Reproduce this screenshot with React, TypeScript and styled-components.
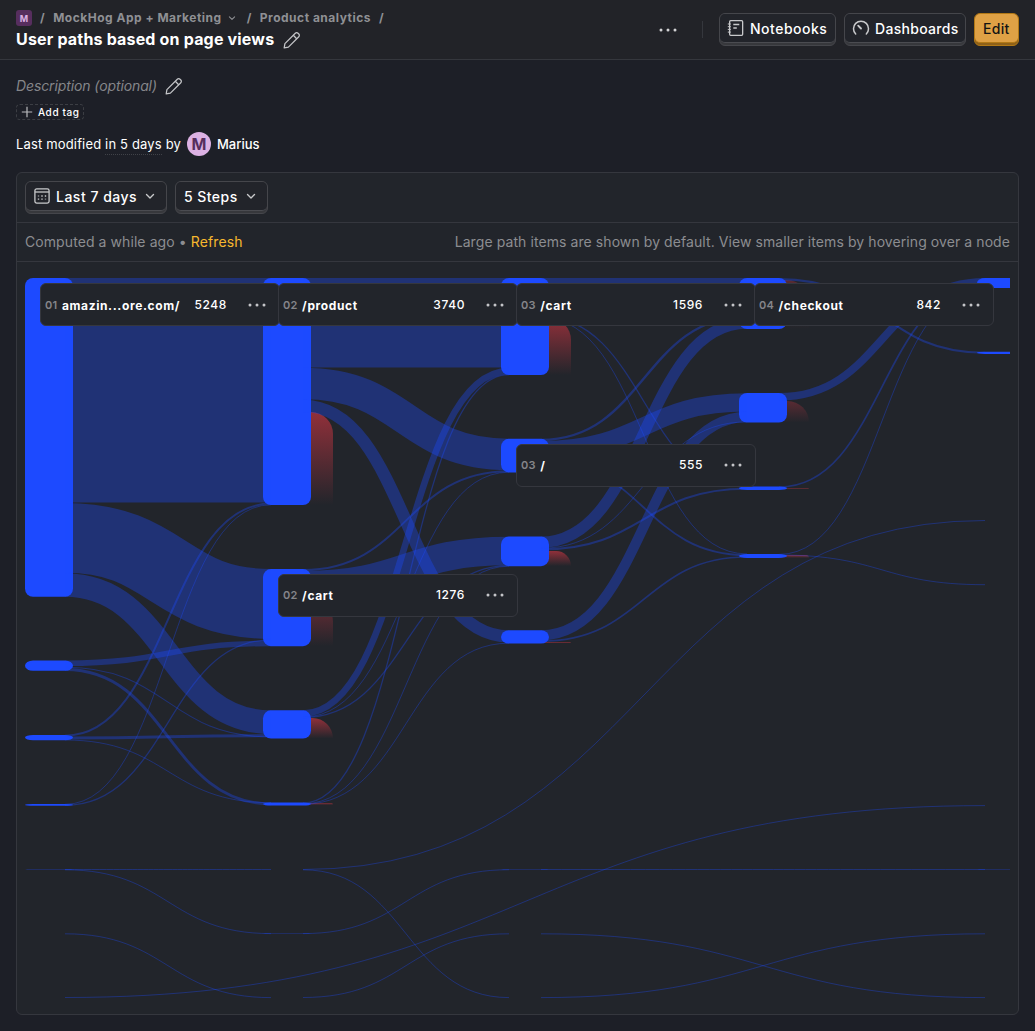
import React from 'react';
import styled, { createGlobalStyle } from 'styled-components';

const GlobalStyle = createGlobalStyle`
  *, *::before, *::after { box-sizing: border-box; }
  html, body { margin: 0; background: #1d1f27; }
  body {
    font-family: Inter, "Liberation Sans", sans-serif;
    font-size: 14px;
    color: #fff;
    overflow: hidden;
  }
`;

const Page = styled.div`
  width: 100%;
  height: 1031px;
  display: flex;
  flex-direction: column;
  background: #1d1f27;
`;

const Header = styled.header`
  flex: none;
  height: 60px;
  padding: 9px 16px 0;
  display: flex;
  justify-content: space-between;
  background: #222328;
  border-bottom: 1px solid #35373d;
`;

const HeaderMain = styled.div`
  display: flex;
  flex-direction: column;
`;

const Crumbs = styled.nav`
  display: flex;
  align-items: center;
  height: 17px;
  font-size: 12px;
  font-weight: 700;
  line-height: 17px;
  letter-spacing: 0.5px;
  color: #8f9094;
  white-space: nowrap;
`;

const ProjectMark = styled.span`
  width: 16px;
  height: 16px;
  margin-top: 1px;
  border-radius: 3px;
  display: flex;
  align-items: center;
  justify-content: center;
  background: #572e5e;
  color: #dcb1e3;
  font-size: 9px;
  letter-spacing: 0;
`;

const Slash = styled.span<{ $left: number; $right: number }>`
  margin-left: ${(p) => p.$left}px;
  margin-right: ${(p) => p.$right}px;
`;

const CrumbIcon = styled.span`
  display: flex;
  margin: 1px 0 0 4px;
`;

const TitleRow = styled.div`
  display: flex;
  align-items: center;
  gap: 9px;
  height: 26px;
`;

const Title = styled.h1`
  margin: 0;
  font-size: 16px;
  line-height: 24px;
  font-weight: 700;
  letter-spacing: 0.18px;
  white-space: nowrap;
`;

const IconSlot = styled.span<{ $top?: number }>`
  display: flex;
  margin-top: ${(p) => p.$top ?? 0}px;
  color: #c4c5c8;
`;

const HeaderActions = styled.div`
  display: flex;
  align-items: flex-start;
  gap: 8px;
  padding-top: 4px;
`;

const MoreSlot = styled.span`
  display: flex;
  align-items: center;
  height: 34px;
  margin-right: 17px;
  color: #d2d2d4;
`;

const Divider = styled.span`
  width: 1px;
  height: 17px;
  margin: 8px 8px 0 0;
  background: #35373d;
`;

const Button = styled.button<{ $primary?: boolean; $width: number }>`
  width: ${(p) => p.$width}px;
  height: 33px;
  padding: 0 0 2px;
  border: 1px solid ${(p) => (p.$primary ? '#b17816' : '#45464b')};
  border-radius: 6px;
  background: ${(p) => (p.$primary ? '#8f6118' : '#37383c')};
  font: inherit;
  display: block;
`;

const ButtonFace = styled.span<{ $primary?: boolean; $tracking?: number }>`
  display: flex;
  align-items: center;
  gap: 5px;
  height: 29px;
  padding: 2px 8px 0;
  border-radius: 5px;
  border-bottom: 1px solid ${(p) => (p.$primary ? '#b17816' : '#4b4c51')};
  background: ${(p) => (p.$primary ? '#dfa145' : '#22242a')};
  color: ${(p) => (p.$primary ? '#141414' : '#fff')};
  font-size: 14px;
  font-weight: 450;
  line-height: 20px;
  letter-spacing: ${(p) => p.$tracking ?? 0.3}px;
  white-space: nowrap;
`;

const Leading = styled.span`
  display: flex;
  flex: none;
  margin: -2px 0 0 -1px;
  color: #c8c9cb;
`;

const Trailing = styled.span`
  display: flex;
  flex: none;
  margin: -2px 0 0 auto;
  color: #c8c9cb;
`;

const Meta = styled.section`
  flex: none;
  height: 112px;
  padding: 14px 16px 0;
  display: flex;
  flex-direction: column;
  align-items: flex-start;
`;

const Description = styled.div`
  display: flex;
  align-items: center;
  gap: 8px;
  height: 24px;
  padding-bottom: 1px;
  font-size: 14px;
  font-style: italic;
  letter-spacing: -0.11px;
  color: #85868a;
  white-space: nowrap;
`;

const AddTag = styled.button`
  display: flex;
  align-items: center;
  gap: 5px;
  width: 68px;
  height: 16px;
  margin-top: 6px;
  padding: 0 4px 0 5px;
  border: 1px dashed #3c3e44;
  border-radius: 4px;
  background: transparent;
  color: #fff;
  font: inherit;
  font-size: 10px;
  font-weight: 500;
  letter-spacing: 0.6px;
  white-space: nowrap;
  svg { flex: none; margin-left: -1px; }
`;

const Modified = styled.div`
  display: flex;
  align-items: center;
  height: 24px;
  margin-top: 12px;
  font-size: 13px;
  letter-spacing: 0.16px;
  white-space: pre;
`;

const When = styled.span`
  border-bottom: 1px dotted #404248;
  line-height: 20px;
  margin-top: 1px;
`;

const Avatar = styled.span`
  width: 24px;
  height: 24px;
  margin: 0 6px 0 6px;
  border-radius: 50%;
  display: flex;
  align-items: center;
  justify-content: center;
  background: #dcb1e3;
  color: #572e5e;
  font-size: 16px;
  font-weight: 700;
`;

const Author = styled.span`
  font-weight: 500;
  letter-spacing: 0;
`;

const Panel = styled.main`
  flex: none;
  height: 843px;
  margin: 0 16px;
  border: 1px solid #35373e;
  border-radius: 6px;
  background: #22252b;
  display: flex;
  flex-direction: column;
`;

const Filters = styled.div`
  flex: none;
  display: flex;
  gap: 8px;
  height: 50px;
  padding: 8px;
  border-bottom: 1px solid #35373e;
`;

const StatusBar = styled.div`
  flex: none;
  display: flex;
  justify-content: space-between;
  align-items: center;
  height: 39px;
  padding: 0 8px 2px;
  border-bottom: 1px solid #35373e;
  color: #8c8d91;
  font-size: 14px;
  letter-spacing: 0.08px;
  white-space: nowrap;
`;

const Refresh = styled.a`
  color: #f7b82e;
  letter-spacing: 0.15px;
`;

const Canvas = styled.div`
  position: relative;
  margin: 16px 8px 0;
  height: 728px;
`;

const Diagram = styled.svg`
  display: block;
  width: 985px;
  height: 728px;
`;

const NodeCard = styled.div<{ $x: number; $y: number }>`
  position: absolute;
  left: ${(p) => p.$x}px;
  top: ${(p) => p.$y}px;
  width: 240px;
  height: 43px;
  padding: 0 13px 0 4px;
  border: 1px solid #35373e;
  border-radius: 6px;
  background: #22252b;
  display: flex;
  align-items: center;
  font-size: 12px;
  line-height: 15px;
  white-space: nowrap;
`;

const StepNo = styled.span`
  font-size: 11px;
  font-weight: 600;
  letter-spacing: 0.35px;
  color: #85868a;
  margin: 1px 4.3px 0 0;
`;

const PathName = styled.span`
  flex: 1;
  font-weight: 700;
  letter-spacing: 0.62px;
  margin-top: 1px;
`;

const Count = styled.span`
  font-weight: 450;
  letter-spacing: 0.6px;
  margin: -1px 21px 0 0;
`;

const PencilIcon = () => (
  <svg width="18" height="18" viewBox="0 0 18 18" fill="none" stroke="currentColor" strokeWidth="1.25" strokeLinejoin="round">
    <path d="M1.2 16.8 1.9 12.6 12.3 2.2a1.9 1.9 0 0 1 2.7 0l.8.8a1.9 1.9 0 0 1 0 2.7L5.4 16.1Z" />
    <path d="M10.3 4.3 13.7 7.7" />
  </svg>
);

const ChevronIcon = ({ size = 16 }: { size?: number }) => (
  <svg width={size} height={size} viewBox="0 0 16 16" fill="none" stroke="currentColor" strokeWidth="1.4" strokeLinecap="round" strokeLinejoin="round">
    <path d="M4.5 6.4 8 9.9l3.500-3.500" />
  </svg>
);

const DotsIcon = () => (
  <svg width="18" height="4" viewBox="0 0 18 4" fill="currentColor">
    <circle cx="2" cy="2" r="1.5" />
    <circle cx="9" cy="2" r="1.5" />
    <circle cx="16" cy="2" r="1.5" />
  </svg>
);

const NotebookIcon = () => (
  <svg width="18" height="18" viewBox="0 0 18 18" fill="none" stroke="currentColor" strokeWidth="1.3">
    <rect x="2.650" y="1.650" width="13" height="14.700" rx="1" />
    <path d="M6.300 5.500h6M6.300 9h3.500" />
    <path d="M.8 5h3M.8 7.700h3M.8 10.400h3M.8 13.100h3" strokeWidth="1" />
  </svg>
);

const GaugeIcon = () => (
  <svg width="18" height="18" viewBox="0 0 18 18" fill="none" stroke="currentColor" strokeWidth="1.5" strokeLinecap="round">
    <path d="M3.700 15A7.500 7.500 0 1 1 14.300 15" />
    <path d="M6.200 6.700 9 9.500" strokeWidth="1.900" />
  </svg>
);

const CalendarIcon = () => (
  <svg width="18" height="18" viewBox="0 0 18 18" fill="none" stroke="currentColor" strokeWidth="1.3">
    <rect x="1.900" y="1.900" width="14.200" height="14.200" rx="1.800" />
    <path d="M2 5h14" />
    <path d="M8.300 9h1.400M11.800 9h1.400M4.800 12.100h1.400M8.300 12.100h1.400" />
    <path d="M4.800 9h1.400M11.800 12.100h1.400" opacity=".6" />
  </svg>
);

const PlusIcon = () => (
  <svg width="12" height="12" viewBox="0 0 12 12" fill="none" stroke="#b9babd" strokeWidth="1.2">
    <path d="M6 .8v10.400M.8 6h10.400" />
  </svg>
);

// Horizontal pitch between steps and the drawn bar width.
const PITCH = 238;
const BAR = 48;
const INSET = 8;

// [column, top, bottom]
const nodes: [number, number, number][] = [
  [0, 278, 596.8], [0, 660.5, 670.8], [0, 735, 740.2], [0, 804.1, 805.8], [0, 869.5, 869.8],
  [1, 278, 505.1], [1, 569.1, 646.2], [1, 710.3, 738.5], [1, 802.5, 805.6], [1, 933.5, 933.8],
  [2, 278, 375], [2, 438.8, 472.4], [2, 536.4, 566.2], [2, 630.2, 643.6], [2, 869.5, 869.8],
  [3, 278, 329], [3, 393, 422.5], [3, 486.6, 489.9], [3, 554.1, 557.9],
  [4, 278, 288], [4, 351.7, 353.9], [4, 869.5, 869.8],
];

// [source column, source centre, target column, target centre, width]
const links: [number, number, number, number, number][] = [
  [0, 390.3, 1, 390.3, 224.6],
  [0, 537.9, 1, 603.9, 69.9],
  [0, 585, 1, 722.2, 23.7],
  [0, 663.2, 1, 643.4, 5.6],
  [0, 667.3, 1, 737, 1.1],
  [0, 669.5, 1, 803.9, 2.9],
  [0, 735.7, 1, 503.6, 2],
  [0, 738, 1, 735.6, 3],
  [0, 740, 1, 802.7, 1],
  [0, 804.3, 1, 504.8, 0.6],
  [0, 805.3, 1, 639.9, 1.3],
  [0, 869.5, 1, 869.5, 0.6],
  [0, 869.8, 1, 933.6, 0.5],
  [0, 933.8, 1, 997.6, 0.5],
  [0, 997.5, 4, 805.6, 0.5],
  [1, 322.7, 2, 322.7, 89.4],
  [1, 383.5, 2, 454.5, 31.7],
  [1, 405.9, 2, 636.4, 12.4],
  [1, 570, 2, 471.2, 2],
  [1, 585.2, 2, 551, 28.7],
  [1, 713.6, 2, 370.9, 6.5],
  [1, 717, 2, 472.2, 0.5],
  [1, 717.5, 2, 565.6, 1.3],
  [1, 803, 2, 374.6, 1.3],
  [1, 803.8, 2, 566.2, 0.6],
  [1, 804.2, 2, 643.2, 0.6],
  [1, 869.5, 4, 520.5, 0.5],
  [1, 869.8, 2, 997.6, 0.5],
  [1, 933.6, 2, 869.7, 0.5],
  [1, 997.5, 2, 933.8, 0.5],
  [2, 297, 3, 297, 38],
  [2, 316.5, 3, 487, 1.3],
  [2, 317.5, 3, 553.9, 0.6],
  [2, 439.9, 3, 316.6, 2.4],
  [2, 450.2, 3, 402.4, 18.4],
  [2, 460.3, 3, 555.2, 1.8],
  [2, 542.2, 3, 323.2, 11.2],
  [2, 548.2, 3, 421.9, 0.6],
  [2, 549.5, 3, 488.7, 2.1],
  [2, 635.3, 3, 416.9, 10.2],
  [2, 641.2, 3, 557, 1.7],
  [2, 869.5, 4, 869.5, 0.5],
  [2, 933.8, 4, 997.6, 0.5],
  [2, 997.6, 4, 933.8, 0.5],
  [3, 279.1, 4, 352.8, 2.1],
  [3, 396.8, 4, 281.9, 7.6],
  [3, 487, 4, 286.6, 1.7],
  [3, 554.4, 4, 287.6, 0.6],
  [3, 555, 4, 584.7, 0.6],
];

// [column, top, bottom, strength]
const dropOffs: [number, number, number, number][] = [
  [1, 412, 505, 0.6],
  [1, 600, 646, 0.4],
  [1, 718, 738.5, 0.6],
  [1, 803.6, 804.8, 0.75],
  [2, 318, 375, 0.6],
  [2, 551, 566, 0.6],
  [2, 641.9, 643.2, 0.7],
  [3, 280, 329, 0.3],
  [3, 401, 422.5, 0.3],
  [3, 488, 489.2, 0.5],
  [3, 555, 558, 0.55],
];

const linkPath = (sc: number, sy: number, tc: number, ty: number) => {
  const x0 = sc * PITCH + BAR - INSET;
  const x1 = tc * PITCH + INSET;
  const mid = (x0 + x1) / 2;
  return `M${x0},${sy}C${mid},${sy} ${mid},${ty} ${x1},${ty}`;
};

const dropPath = (col: number, top: number, bottom: number) => {
  const x = col * PITCH + BAR;
  const h = bottom - top;
  const r = Math.min(22, h);
  return `M${x - 8},${top}H${x + 22 - r}a${r},${r} 0 0 1 ${r},${r}V${bottom}H${x - 8}Z`;
};

const cards = [
  { x: 15, y: 5, step: '01', name: 'amazin...ore.com/', count: 5248 },
  { x: 253, y: 5, step: '02', name: '/product', count: 3740 },
  { x: 491, y: 5, step: '03', name: '/cart', count: 1596 },
  { x: 729, y: 5, step: '04', name: '/checkout', count: 842 },
  { x: 491, y: 165.6, step: '03', name: '/', count: 555 },
  { x: 253, y: 295.6, step: '02', name: '/cart', count: 1276 },
];

const PathsDiagram = () => (
  <Diagram viewBox="0 278 985 728">
    <defs>
      <linearGradient id="drop" x1="0" y1="0" x2="0" y2="1">
        <stop offset="0" stopColor="#db3744" />
        <stop offset="1" stopColor="#db3744" stopOpacity="0" />
      </linearGradient>
    </defs>
    {dropOffs.map(([c, t, b, o], i) => (
      <path key={i} d={dropPath(c, t, b)} fill="url(#drop)" opacity={o} />
    ))}
    {nodes.map(([c, t, b], i) => (
      <rect key={i} x={c * PITCH} y={t} width={BAR} height={b - t} rx="8" fill="#1d4aff" />
    ))}
    <g fill="none" stroke="#1d4aff" strokeOpacity="0.35">
      {links.map(([sc, sy, tc, ty, w], i) => (
        <path key={i} d={linkPath(sc, sy, tc, ty)} strokeWidth={Math.max(1, w)} />
      ))}
    </g>
  </Diagram>
);

export default function App() {
  return (
    <Page>
      <GlobalStyle />
      <Header>
        <HeaderMain>
          <Crumbs>
            <ProjectMark>M</ProjectMark>
            <Slash $left={8} $right={8}>/</Slash>
            MockHog App + Marketing
            <CrumbIcon><ChevronIcon size={12} /></CrumbIcon>
            <Slash $left={9} $right={8}>/</Slash>
            Product analytics
            <Slash $left={8} $right={0}>/</Slash>
          </Crumbs>
          <TitleRow>
            <Title>User paths based on page views</Title>
            <IconSlot $top={2}><PencilIcon /></IconSlot>
          </TitleRow>
        </HeaderMain>
        <HeaderActions>
          <MoreSlot><DotsIcon /></MoreSlot>
          <Divider />
          <Button $width={117}><ButtonFace $tracking={0.5}><Leading><NotebookIcon /></Leading>Notebooks</ButtonFace></Button>
          <Button $width={122}><ButtonFace><Leading><GaugeIcon /></Leading>Dashboards</ButtonFace></Button>
          <Button $width={45} $primary><ButtonFace $primary>Edit</ButtonFace></Button>
        </HeaderActions>
      </Header>
      <Meta>
        <Description>
          Description (optional)
          <IconSlot><PencilIcon /></IconSlot>
        </Description>
        <AddTag><PlusIcon />Add tag</AddTag>
        <Modified>
          {'Last modified '}<When>in 5 days</When>{' by'}
          <Avatar>M</Avatar>
          <Author>Marius</Author>
        </Modified>
      </Meta>
      <Panel>
        <Filters>
          <Button $width={142}>
            <ButtonFace $tracking={0.5}><Leading><CalendarIcon /></Leading>Last 7 days<Trailing><ChevronIcon /></Trailing></ButtonFace>
          </Button>
          <Button $width={93}>
            <ButtonFace $tracking={0.45}>5 Steps<Trailing><ChevronIcon /></Trailing></ButtonFace>
          </Button>
        </Filters>
        <StatusBar>
          <span>Computed a while ago • <Refresh>Refresh</Refresh></span>
          <span>Large path items are shown by default. View smaller items by hovering over a node</span>
        </StatusBar>
        <Canvas>
          <PathsDiagram />
          {cards.map((c, i) => (
            <NodeCard key={i} $x={c.x} $y={c.y}>
              <StepNo>{c.step}</StepNo>
              <PathName>{c.name}</PathName>
              <Count>{c.count}</Count>
              <IconSlot><DotsIcon /></IconSlot>
            </NodeCard>
          ))}
        </Canvas>
      </Panel>
    </Page>
  );
}
